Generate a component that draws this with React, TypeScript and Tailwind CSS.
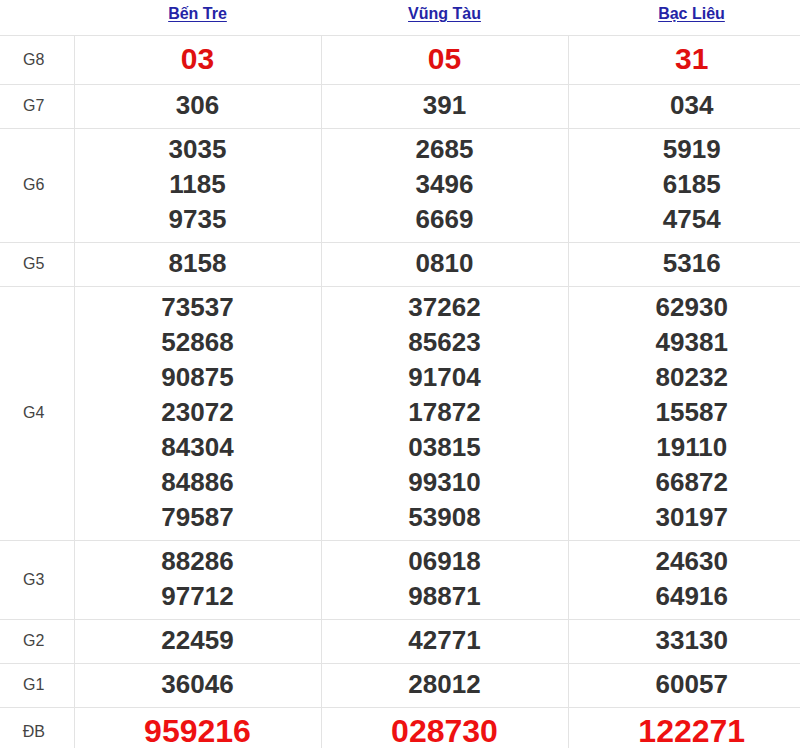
import React from "react";

type Row = { g: string; v: string[][]; kind?: "g8" | "db" };

const provinces = ["Bến Tre", "Vũng Tàu", "Bạc Liêu"];

const rows: Row[] = [
  { g: "G8", v: [["03"], ["05"], ["31"]], kind: "g8" },
  { g: "G7", v: [["306"], ["391"], ["034"]] },
  {
    g: "G6",
    v: [
      ["3035", "1185", "9735"],
      ["2685", "3496", "6669"],
      ["5919", "6185", "4754"],
    ],
  },
  { g: "G5", v: [["8158"], ["0810"], ["5316"]] },
  {
    g: "G4",
    v: [
      ["73537", "52868", "90875", "23072", "84304", "84886", "79587"],
      ["37262", "85623", "91704", "17872", "03815", "99310", "53908"],
      ["62930", "49381", "80232", "15587", "19110", "66872", "30197"],
    ],
  },
  {
    g: "G3",
    v: [
      ["88286", "97712"],
      ["06918", "98871"],
      ["24630", "64916"],
    ],
  },
  { g: "G2", v: [["22459"], ["42771"], ["33130"]] },
  { g: "G1", v: [["36046"], ["28012"], ["60057"]] },
  { g: "ĐB", v: [["959216"], ["028730"], ["122271"]], kind: "db" },
];

export default function App() {
  return (
    <div className="w-[800px] h-[748px] overflow-hidden bg-white font-['Liberation_Sans',Arial,sans-serif]">
      <table className="w-[815px] border-collapse table-fixed">
        <colgroup>
          <col className="w-[74px]" />
          <col className="w-[247px]" />
          <col className="w-[247px]" />
          <col className="w-[247px]" />
        </colgroup>
        <thead>
          <tr className="h-[35px]">
            <th />
            {provinces.map((p) => (
              <th key={p} className="text-center align-middle pb-[6px]">
                <a href="#" className="text-[16px] font-bold text-[#2424a6] underline underline-offset-2">
                  {p}
                </a>
              </th>
            ))}
          </tr>
        </thead>
        <tbody>
          {rows.map((r) => (
            <tr key={r.g} className="border-t border-[#e3e3e3]">
              <td className="text-center align-middle text-[16px] text-[#444] pr-[6px]">{r.g}</td>
              {r.v.map((nums, i) => (
                <td key={i} className="border-l border-[#e3e3e3] text-center align-middle pt-[3px] pb-[5px]">
                  {nums.map((n) => (
                    <div
                      key={n}
                      className={
                        r.kind === "g8"
                          ? "text-[30px] leading-[40px] font-bold text-[#e01010]"
                          : r.kind === "db"
                          ? "text-[32px] leading-[40px] font-bold text-[#ee1111]"
                          : "text-[26px] leading-[35px] font-bold text-[#333]"
                      }
                    >
                      {n}
                    </div>
                  ))}
                </td>
              ))}
            </tr>
          ))}
        </tbody>
      </table>
    </div>
  );
}
